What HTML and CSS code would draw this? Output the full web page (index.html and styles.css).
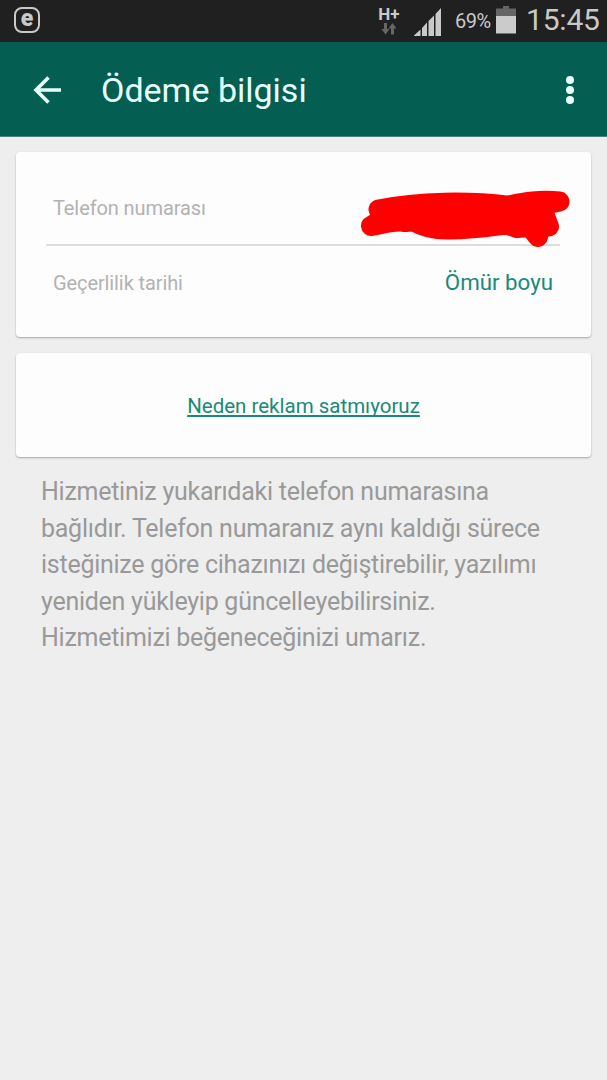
FILE: index.html
```html
<!DOCTYPE html>
<html lang="tr">
<head>
    <meta charset="UTF-8">
    <meta name="viewport" content="width=device-width, initial-scale=1.0">
    <title>Ödeme bilgisi</title>
    <link rel="stylesheet" href="styles.css">
</head>
<body>

    <div class="status">
        <div class="app-icon"><span>e</span></div>
        <div class="network">
            <span class="type">H+</span>
            <svg width="16" height="12" viewBox="0 0 16 12">
                <path d="M3 0h3v6h2.500L4.500 11.500L.500 6H3z" fill="#666"/>
                <path d="M10 11.500h3v-6h2.500L11.500 0L7.500 5.500H10z" fill="#666"/>
            </svg>
        </div>
        <svg class="signal" width="28" height="28" viewBox="0 0 28 28">
            <path d="M0 28V27.500L6.500 21.500V28zM8 28V20L13 14.500V28zM14.500 28V13L20 7.500V28zM21.500 28V6L27 0V28z" fill="#c9c9c9"/>
        </svg>
        <span class="percent">69%</span>
        <svg class="battery" width="20" height="28" viewBox="0 0 20 28">
            <path d="M7 0h6v2.500h7V11H0V2.500h7z" fill="#656565"/>
            <path d="M0 10h20v17.500H0z" fill="#cbcbcb"/>
        </svg>
        <span class="clock">15:45</span>
    </div>

    <div class="toolbar">
        <svg class="back" width="30" height="28" viewBox="0 0 30 28">
            <path d="M28 14H3M15.500 1.500L3 14l12.500 12.500" fill="none" stroke="#e6fffb" stroke-width="3.600"/>
        </svg>
        <h1>Ödeme bilgisi</h1>
        <div class="menu"><i></i><i></i><i></i></div>
    </div>

    <main>
        <div class="card info">
            <div class="row">
                <span class="label">Telefon numarası</span>
                <svg class="hidden-number" width="210" height="60" viewBox="0 0 210 60">
                    <path d="M18.500 20.500C60 12 110 12 148 16.700C165 13 180 10.500 199.500 12.500L184 16L185 27L189 37.500L180 37L178 48L170 38L157 39L147 35.500C128 38 108 41 87 40.500C76 40.500 65 39 53 32C49 34 44 33 41 32.500C30 32 20 36 11 37L24 29Z" fill="#f00" stroke="#f00" stroke-width="20" stroke-linejoin="round"/>
                </svg>
            </div>
            <div class="row">
                <span class="label">Geçerlilik tarihi</span>
                <span class="value">Ömür boyu</span>
            </div>
        </div>

        <div class="card link">
            <a href="#">Neden reklam satmıyoruz</a>
        </div>

        <p class="note">Hizmetiniz yukarıdaki telefon numarasına<br>
            bağlıdır. Telefon numaranız aynı kaldığı sürece<br>
            isteğinize göre cihazınızı değiştirebilir, yazılımı<br>
            yeniden yükleyip güncelleyebilirsiniz.<br>
            Hizmetimizi beğeneceğinizi umarız.</p>
    </main>

</body>
</html>
```
FILE: styles.css
```css
*{margin: 0; padding: 0; box-sizing: border-box;}
body{background-color: #eee; font-family: Roboto, "Liberation Sans", sans-serif; min-height: 100vh; overflow: hidden;}

.status{height: 42px; background-color: #202020; color: #c9c9c9; display: flex; align-items: flex-start; padding: 0 7px 0 14px;}
.app-icon{width: 26px; height: 26px; margin-top: 7px; border: 2px solid #c9c9c9; border-radius: 8px; display: flex; align-items: center; justify-content: center;}
.app-icon span{font-size: 23px; font-weight: 900; line-height: 20px; margin-top: -2px;}
.network{width: 24px; margin: 5px 13px 0 auto; display: flex; flex-direction: column; align-items: center;}
.network .type{font-size: 17px; font-weight: bold; line-height: 18px;}
.network svg{display: block;}
.signal{margin: 8px 13px 0 0;}
.percent{width: 36px; font-size: 20px; line-height: 24px; margin: 9px 5px 0 0; letter-spacing: -0.5px;}
.battery{margin: 6px 10px 0 0;}
.clock{width: 74px; font-size: 30px; line-height: 36px; margin-top: 2px; letter-spacing: -0.2px;}

.toolbar{height: 95px; background-color: #055e52; border-bottom: 1px solid #4d8279; display: flex; align-items: center; padding: 1px 33px 0 33px;}
.toolbar h1{font-size: 34px; font-weight: normal; color: #e6fffb; margin-left: 38px; line-height: 40px; padding-top: 1px;}
.menu{display: flex; flex-direction: column; gap: 2px; margin-left: auto;}
.menu i{width: 8px; height: 8px; border-radius: 50%; background-color: #e6fffb;}

main{padding: 15px 16px;}
.card{background-color: #fdfdfd; border-radius: 4px; box-shadow: 0 1px 2px rgba(0, 0, 0, 0.3);}
.info{height: 185px; padding: 19px 31px 0 30px;}
.row{height: 75px; display: flex; justify-content: space-between; align-items: center; padding: 0 7px;}
.row:first-child{border-bottom: 2px solid #ddd;}
.row:last-child{height: 74px;}
.label{font-size: 20px; color: #b2b2b2; letter-spacing: -0.1px;}
.value{font-size: 22.3px; color: #198a79; margin-top: -2px;}
.hidden-number{position: relative; left: 17px; top: 11px;}
.link{height: 104px; margin-top: 16px; padding-top: 1px; display: flex; align-items: center; justify-content: center;}
.link a{font-size: 20.5px; color: #198a79; text-decoration-thickness: 1.5px; text-underline-offset: 2px; text-decoration-skip-ink: none;}
.note{font-size: 25px; line-height: 36.5px; letter-spacing: -0.26px; color: #999; padding: 17px 25px; white-space: nowrap;}
```
